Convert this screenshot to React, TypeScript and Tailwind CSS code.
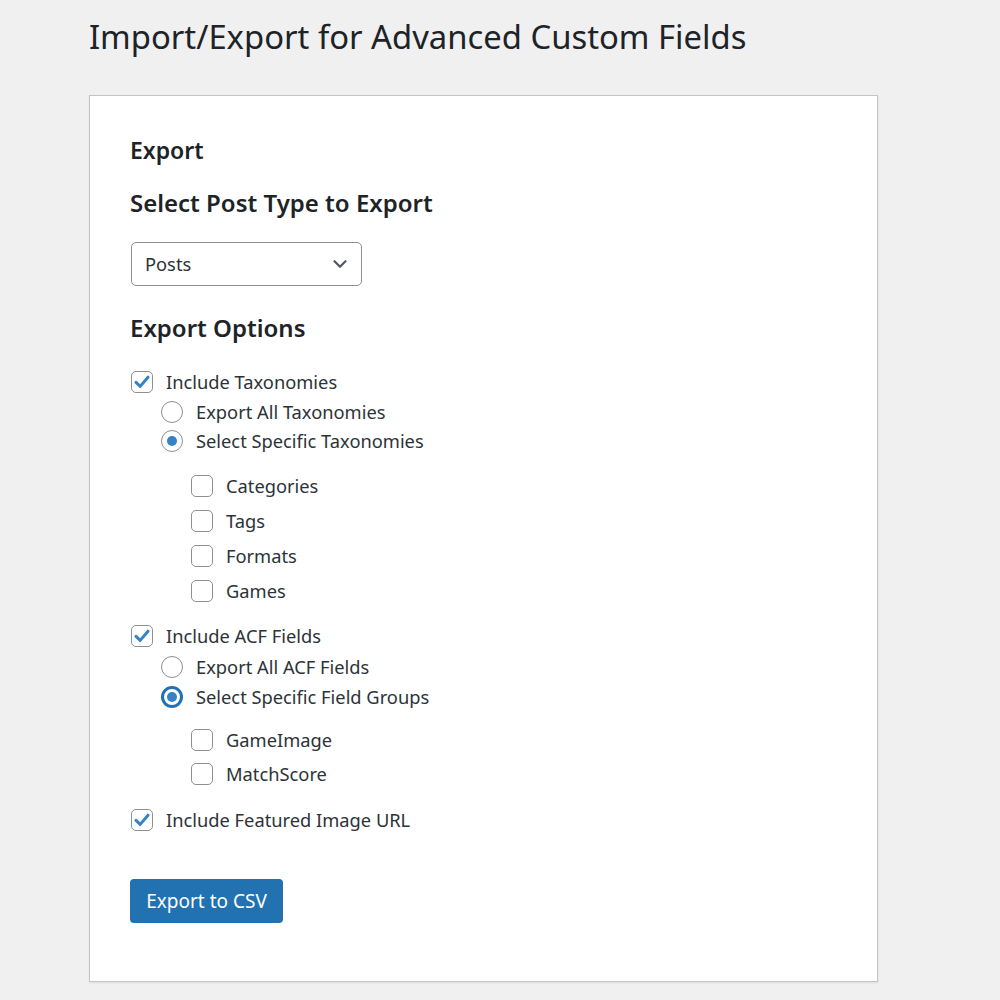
import React from 'react'

const font = { fontFamily: '"Noto Sans", "Open Sans", sans-serif' }

const Check = ({ checked = false }: { checked?: boolean }) => (
  <span className="flex h-[22px] w-[22px] shrink-0 items-center justify-center rounded-[5px] border border-[#8c8f94] bg-white">
    {checked && (
      <svg viewBox="0 0 20 20" className="h-[20px] w-[20px]">
        <path d="M4 10.4 L8.2 14.4 L16 5.2" fill="none" stroke="#3582c4" strokeWidth="3" strokeLinecap="round" strokeLinejoin="round" />
      </svg>
    )}
  </span>
)

const Radio = ({ checked = false, focused = false }: { checked?: boolean; focused?: boolean }) => (
  <span
    className={`flex h-[22px] w-[22px] shrink-0 items-center justify-center rounded-full bg-white ${
      focused ? 'border-[3px] border-[#2271b1]' : 'border border-[#8c8f94]'
    }`}
  >
    {checked && <span className="h-[10px] w-[10px] rounded-full bg-[#3582c4]" />}
  </span>
)

const Row = ({ children, label, className = '' }: { children: React.ReactNode; label: string; className?: string }) => (
  <label className={`flex h-[22px] items-center gap-[13px] text-[18.3px] leading-[22px] text-[#2c3338] ${className}`}>
    {children}
    <span>{label}</span>
  </label>
)

const taxonomies = ['Categories', 'Tags', 'Formats', 'Games']
const fieldGroups = ['GameImage', 'MatchScore']

const ExportPage = () => {
  return (
    <div className="min-h-[1000px] w-[1000px] bg-[#f0f0f1] pt-[15px]" style={font}>
      <h1 className="pl-[89px] text-[32.8px] leading-[44px] font-normal text-[#1d2327]">
        Import/Export for Advanced Custom Fields
      </h1>

      <div className="ml-[89px] mt-[36px] h-[887px] w-[789px] border border-[#c3c4c7] bg-white pl-[40px] pt-[38px] shadow-[0_1px_2px_rgba(0,0,0,0.08)]">
        <h2 className="text-[23px] leading-[32px] font-semibold text-[#1d2327]">Export</h2>
        <h3 className="mt-[20px] text-[24px] leading-[34px] font-semibold text-[#1d2327]">Select Post Type to Export</h3>

        <div className="ml-[1px] mt-[22px] flex h-[44px] w-[231px] items-center justify-between rounded-[5px] border border-[#8c8f94] pl-[13px] pr-[10px] text-[18.3px] text-[#2c3338]">
          <span>Posts</span>
          <svg viewBox="0 0 20 20" className="h-[22px] w-[22px]">
            <path d="M5 7.5 L10 12.5 L15 7.5" fill="none" stroke="#50575e" strokeWidth="2" strokeLinecap="round" strokeLinejoin="round" />
          </svg>
        </div>

        <h3 className="mt-[25px] text-[24px] leading-[34px] font-semibold text-[#1d2327]">Export Options</h3>

        <div className="ml-[1px] mt-[26px] flex flex-col">
          <Row label="Include Taxonomies">
            <Check checked />
          </Row>
          <div className="ml-[30px] flex flex-col">
            <Row label="Export All Taxonomies" className="mt-[8px]">
              <Radio />
            </Row>
            <Row label="Select Specific Taxonomies" className="mt-[7px]">
              <Radio checked />
            </Row>
            <div className="ml-[30px] mt-[23px] flex flex-col gap-[13px]">
              {taxonomies.map((t) => (
                <Row key={t} label={t}>
                  <Check />
                </Row>
              ))}
            </div>
          </div>

          <Row label="Include ACF Fields" className="mt-[23px]">
            <Check checked />
          </Row>
          <div className="ml-[30px] flex flex-col">
            <Row label="Export All ACF Fields" className="mt-[9px]">
              <Radio />
            </Row>
            <Row label="Select Specific Field Groups" className="mt-[8px]">
              <Radio checked focused />
            </Row>
            <div className="ml-[30px] mt-[21px] flex flex-col gap-[12px]">
              {fieldGroups.map((g) => (
                <Row key={g} label={g}>
                  <Check />
                </Row>
              ))}
            </div>
          </div>

          <Row label="Include Featured Image URL" className="mt-[24px]">
            <Check checked />
          </Row>
        </div>

        <button className="mt-[48px] h-[44px] w-[153px] rounded-[4px] bg-[#2271b1] text-[19px] text-white">
          Export to CSV
        </button>
      </div>
    </div>
  )
}

export default ExportPage
